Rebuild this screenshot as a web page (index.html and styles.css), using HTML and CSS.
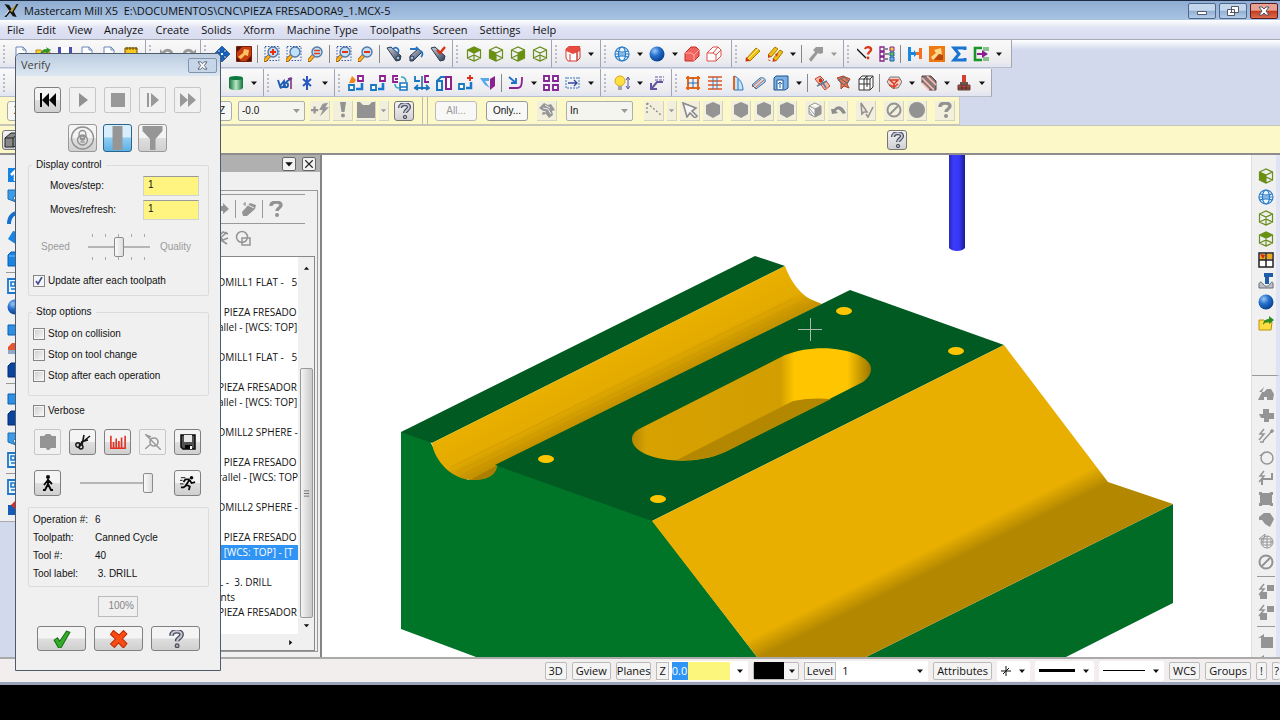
FILE: index.html
```html
<!DOCTYPE html>
<html lang="en">
<head>
<meta charset="utf-8">
<title>Mastercam Mill X5</title>
<link rel="stylesheet" href="styles.css">
</head>
<body>
<svg class="defs" aria-hidden="true">
<defs>
<linearGradient id="steel" x2="1" y2="1"><stop offset="0" stop-color="#cdd5e2"/><stop offset="1" stop-color="#2e3c55"/></linearGradient>
<radialGradient id="ball" cx=".35" cy=".3" r=".75"><stop offset="0" stop-color="#9cc8f8"/><stop offset=".45" stop-color="#2470cc"/><stop offset="1" stop-color="#063c8c"/></radialGradient>
<linearGradient id="cyl"><stop offset="0" stop-color="#107038"/><stop offset=".5" stop-color="#b8e8c4"/><stop offset="1" stop-color="#107038"/></linearGradient>
<linearGradient id="groove" gradientUnits="userSpaceOnUse" x1="600" y1="359" x2="621" y2="401"><stop offset="0" stop-color="#e9b000"/><stop offset=".6" stop-color="#e4ab00"/><stop offset="1" stop-color="#c59300"/></linearGradient>
<linearGradient id="slot" gradientUnits="userSpaceOnUse" x1="632" y1="0" x2="871" y2="0"><stop offset="0" stop-color="#b48800"/><stop offset=".06" stop-color="#d7a100"/><stop offset=".62" stop-color="#d29e00"/><stop offset=".68" stop-color="#ffc600"/><stop offset=".9" stop-color="#ffc600"/><stop offset="1" stop-color="#9a7600"/></linearGradient>
<linearGradient id="slope" gradientUnits="userSpaceOnUse" x1="929" y1="550" x2="938" y2="568"><stop offset="0" stop-color="#e8af00"/><stop offset="1" stop-color="#b38700"/></linearGradient>
<linearGradient id="drill"><stop offset="0" stop-color="#2929b8"/><stop offset=".3" stop-color="#3c3cff"/><stop offset=".65" stop-color="#3636f4"/><stop offset="1" stop-color="#1c1c90"/></linearGradient>
</defs>
<symbol id="down" viewBox="0 0 16 16"><path d="M2 5h12L8 12z" fill="currentColor"/></symbol>
<symbol id="new" viewBox="0 0 16 16"><path d="M3 1h7l3 3v11H3z" fill="#fff" stroke="#6a86b8"/><path d="M10 1v3h3" fill="none" stroke="#6a86b8"/></symbol>
<symbol id="open" viewBox="0 0 16 16"><path d="M1 4h5l1 2h8l-2 9H1z" fill="#fcd030" stroke="#b88a10"/><path d="M5 9c1-5 4-6 7-6l-1-2 5 3-5 4V6C9 6 7 7 5 9" fill="#309428"/></symbol>
<symbol id="save" viewBox="0 0 16 16"><path d="M1 1h14v14H1z" fill="#4a50b0"/><path d="M4 1h8v6H4zM4 10h8v5H4z" fill="#fff"/></symbol>
<symbol id="calc" viewBox="0 0 16 16"><path d="M2 2h12v13H2z" fill="#f8c820" stroke="#6a4800"/><path d="M4 1v3M7 1v3M10 1v3M13 1v3M4 8h8M4 11h8" stroke="#6a4800"/></symbol>
<symbol id="undo" viewBox="0 0 16 16"><path d="M4 7c4-5 10-3 9 5" fill="none" stroke="#9a9c9a" stroke-width="3"/><path d="M1 3v8h7z" fill="#9a9c9a"/></symbol>
<symbol id="redo" viewBox="0 0 16 16"><path d="M12 7c-4-5-10-3-9 5" fill="none" stroke="#9a9c9a" stroke-width="3"/><path d="M15 3v8H8z" fill="#9a9c9a"/></symbol>
<symbol id="pan" viewBox="0 0 16 16"><path d="m8 0 4 4h-2v2h2V4l4 4-4 4v-2h-2v2h2l-4 4-4-4h2v-2H4v2L0 8l4-4v2h2V4H4z" fill="#1762bc" stroke="#0b3d80" stroke-width=".6"/><path d="M7 7h2v2H7z" fill="#fff"/></symbol>
<symbol id="fit" viewBox="0 0 16 16"><path d="M.5.5h15v15H.5z" fill="#c83c10" stroke="#7c2008"/><path d="M1 1h5L1 6zM15 10v5h-5zM1 11v4h4z" fill="#501808"/><path d="m8 3 5 1-1 6-3-1-4 4-3-2 5-4z" fill="#ffc060"/></symbol>
<symbol id="lens" viewBox="0 0 16 16"><path d="M6 9 1 14.500" stroke="#9c5a08" stroke-width="4" stroke-linecap="round"/><path d="M6 9 1.500 14" stroke="#ffb524" stroke-width="2.400" stroke-linecap="round"/><circle cx="9" cy="6" r="5" fill="#bfe0fa" stroke="#5478a4" stroke-width="1.400"/></symbol>
<symbol id="zoomin" viewBox="0 0 16 16"><path d="M1 .5h14v14H1z" fill="none" stroke="#2858b0" stroke-dasharray="1.500 1.500"/><use href="#lens"/><path d="M6 6h6M9 3v6" stroke="#e83010" stroke-width="2"/></symbol>
<symbol id="zoombox" viewBox="0 0 16 16"><path d="M1 .5h14v14H1z" fill="none" stroke="#2858b0" stroke-dasharray="1.500 1.500"/><use href="#lens"/></symbol>
<symbol id="zoomeq" viewBox="0 0 16 16"><use href="#lens"/><path d="M6 4.500h6M6 7.500h6" stroke="#d84020" stroke-width="1.600"/></symbol>
<symbol id="zoomoutbox" viewBox="0 0 16 16"><path d="M1 .5h14v14H1z" fill="none" stroke="#2858b0" stroke-dasharray="1.500 1.500"/><use href="#lens"/><path d="M6 6h6" stroke="#e83010" stroke-width="2"/></symbol>
<symbol id="zoomout" viewBox="0 0 16 16"><use href="#lens"/><path d="M6 6h6" stroke="#e83010" stroke-width="2"/></symbol>
<symbol id="scope1" viewBox="0 0 16 16"><path d="m1 2 4-1 10 9-1 4-4 1z" fill="url(#steel)" stroke="#28384c"/><path d="M7 3c3-3 7 0 5 4" fill="none" stroke="#2474c8" stroke-width="1.700"/><circle cx="12" cy="12" r="2" fill="#a8bcd8" stroke="#28384c"/></symbol>
<symbol id="scope2" viewBox="0 0 16 16"><path d="m2 10 8-7 4 3-9 9H2z" fill="url(#steel)" stroke="#28384c"/><path d="M2 3h8l-2-2m5 4c2 2 2 4 0 6" fill="none" stroke="#2474c8" stroke-width="1.800"/><circle cx="4" cy="12" r="2" fill="#a8bcd8" stroke="#28384c"/></symbol>
<symbol id="scope3" viewBox="0 0 16 16"><path d="m1 2 4-1 10 9-1 4-4 1z" fill="url(#steel)" stroke="#28384c"/><path d="m7 4 3 3 5-6" fill="none" stroke="#dc2c10" stroke-width="2.300"/></symbol>
<symbol id="cube" viewBox="0 0 16 16"><path d="M1.500 4 8 1l6.500 3v8L8 15l-6.500-3zM1.500 4 8 7l6.500-3M8 7v8M1.500 12 8 9l6.500 3" fill="none" stroke="#6a8e1c" stroke-width="1.200"/></symbol>
<symbol id="cubetop" viewBox="0 0 16 16"><path d="M1.500 4 8 1l6.500 3L8 7z" fill="#6a9208"/><use href="#cube"/></symbol>
<symbol id="cubeleft" viewBox="0 0 16 16"><path d="M1.500 4 8 7v8l-6.500-3z" fill="#6a9208"/><use href="#cube"/></symbol>
<symbol id="cuberight" viewBox="0 0 16 16"><path d="M14.500 4 8 7v8l6.500-3z" fill="#6a9208"/><use href="#cube"/></symbol>
<symbol id="cubered" viewBox="0 0 16 16"><path d="M1 3 4 .5h11L12 4v11H3l-2-3z" fill="#fff" stroke="#d43c34"/><path d="M1 3 4 .5h11V5L8 8 1 5z" fill="#e84c40"/><path d="M5 8v7M12 4v11l3-3V2" fill="none" stroke="#d43c34"/></symbol>
<symbol id="globe" viewBox="0 0 16 16"><g fill="none" stroke="#2c7cc8" stroke-width="1.200"><circle cx="8" cy="8" r="7" fill="#e8f6ff"/><ellipse cx="8" cy="8" rx="3.500" ry="7"/><path d="M1 8h14M2 5c4 1.500 8 1.500 12 0M2 11c4-1.500 8-1.500 12 0"/></g></symbol>
<symbol id="sphere" viewBox="0 0 16 16"><circle cx="8" cy="8" r="7.500" fill="url(#ball)"/></symbol>
<symbol id="solid" viewBox="0 0 16 16"><path d="M1 7 7 1h5l3 3v6l-5 5H1z" fill="#f06460" stroke="#c82820"/><path d="M1 7h6l3 2 5-5M10 9v6" fill="none" stroke="#ffaaa4"/></symbol>
<symbol id="solidwire" viewBox="0 0 16 16"><path d="M1 7 7 1h5l3 3v6l-5 5H1zM1 7h6l3 2 5-5M10 9v6M7 7l5-6" fill="#fff" stroke="#e05048"/></symbol>
<symbol id="pencil" viewBox="0 0 16 16"><path d="m1 13 10-11 4 3L5 15z" fill="#f4c010" stroke="#a87c08"/><path d="m1 11-.5 4.500L5 15z" fill="#d42c14"/><path d="m3 13 10-10" stroke="#fff09a"/></symbol>
<symbol id="pencils" viewBox="0 0 16 16"><path d="m1 9 7-8 3 2-7 8zM6 13l7-9 3 2-7 9z" fill="#f4c010" stroke="#a87c08"/><path d="M1 8v4l3-1zM6 12l-.5 4 3.500-1zM2 15l-1-2 3 2zM8 8l3-1-1 4z" fill="#d43c14"/></symbol>
<symbol id="pengrey" viewBox="0 0 16 16"><path d="m1 13 6-7-2-2 3-3h7v6l-3 1-2-1-7 9z" fill="#999"/></symbol>
<symbol id="query" viewBox="0 0 16 16"><path d="m0 3 9 9" stroke="#111" stroke-width="1.300"/><path d="M8 3c1-3 7-2 6 1-.5 2-3 2-3 4.500" fill="none" stroke="#d83818" stroke-width="2.300"/><circle cx="11" cy="12" r="1.400" fill="#d83818"/></symbol>
<symbol id="chain" viewBox="0 0 16 16"><path d="M1 1h4v4H1zM1 6h4v4H1zM1 11h4v4H1z" fill="#fff" stroke="#84208c" stroke-width="1.300"/><path d="M11 1h4v4h-4z" fill="#f8d050" stroke="#84208c"/><path d="M11 6h4v4h-4z" fill="#60c060" stroke="#205c98"/><path d="M11 11h4v4h-4z" fill="#70b0f0" stroke="#205c98"/><path d="M6 3h3M6 8h4M6 13h3" stroke="#222"/></symbol>
<symbol id="hh" viewBox="0 0 16 16"><path d="M1 1h3v5h3V4l3 4-3 3V9H4v6H1z" fill="#1888e0"/><path d="M15 2h-3v4H9v3h3v4h3z" fill="#f4701c"/></symbol>
<symbol id="tool" viewBox="0 0 16 16"><path d="M0 0h16v16H0z" fill="#f07810"/><path d="m5 4 7-2 1 7-3-1-6 6-2-3 5-4z" fill="#ffd890"/><path d="m10 8 4 1v5H5z" fill="#b84808"/></symbol>
<symbol id="sigma" viewBox="0 0 16 16"><path d="M14 4V2H3l5 6-5 6h11v-2" fill="none" stroke="#1874d0" stroke-width="3"/></symbol>
<symbol id="post" viewBox="0 0 16 16"><path d="M9 2H2v12h7" fill="none" stroke="#189428" stroke-width="2.600"/><path d="M11 1v4M13 1v4M15 1v4M11 11v4M13 11v4M15 11v4" stroke="#189428"/><path d="M4 7h5V4l6 4-6 4V9H4z" fill="#8c1c90"/></symbol>
<symbol id="cylinder" viewBox="0 0 16 16"><path d="M1 3v10c2 3 12 3 14 0V3z" fill="url(#cyl)"/><ellipse cx="8" cy="3" rx="7" ry="2" fill="#0c7840"/></symbol>
<symbol id="axes" viewBox="0 0 16 16"><path d="M1 5l2 6 4-5 1 5-5 2M7 10c0-3 4-3 4 0s-4 3-4 0M9 7l6-4" fill="none" stroke="#205cb0" stroke-width="1.900"/><path d="M14 3v11M11 4l3-1" stroke="#84307c" stroke-width="1.600"/></symbol>
<symbol id="star" viewBox="0 0 16 16"><path d="M8 1v14M4 4l8 7M12 4 4 11" stroke="#2858c0" stroke-width="2"/></symbol>
<symbol id="x1" viewBox="0 0 16 16"><path d="M10 1h5v5h-5z" fill="#fff" stroke="#8c2090" stroke-width="1.800"/><path d="M1 10h5v5H1z" fill="#fff" stroke="#1878c0" stroke-width="1.800"/><path d="m1 8 3-7 4 4-2 3z" fill="#f08818"/><path d="M8 14h6V8" fill="none" stroke="#1878d0" stroke-width="2.600"/></symbol>
<symbol id="x2" viewBox="0 0 16 16"><path d="M10 1h5v5h-5z" fill="#fff" stroke="#8c2090" stroke-width="1.800"/><path d="M1 10h5v5H1z" fill="#fff" stroke="#1878c0" stroke-width="1.800"/><path d="M8 14h5V8" fill="none" stroke="#1878d0" stroke-width="2.600"/></symbol>
<symbol id="x3" viewBox="0 0 16 16"><path d="M6 1H1v6h5M3 4h3" fill="none" stroke="#8c2090" stroke-width="1.800"/><path d="M8 8h7v7H8zM8 12h7" fill="#fff" stroke="#1878c0" stroke-width="1.600"/><path d="M9 2c4 0 5 2 5 5M3 9c0 3 1 4 4 4" fill="none" stroke="#38a8b8" stroke-width="1.600"/></symbol>
<symbol id="x4" viewBox="0 0 16 16"><path d="M1 1v5h5M0 13h15M4 10l-3 3 3 2M12 10l3 3-3 2" fill="none" stroke="#1878c0" stroke-width="1.800"/><path d="M15 1h-4v6h4" fill="none" stroke="#8c2090" stroke-width="1.800"/><path d="M8 1v14" stroke="#246cac" stroke-width="1.600"/></symbol>
<symbol id="x5" viewBox="0 0 16 16"><path d="M1 6h5v9H1zM1 6l4-4h4" fill="none" stroke="#1878c0" stroke-width="2"/><path d="M10 2h5v12h-5z" fill="#fff" stroke="#8c2090" stroke-width="2"/></symbol>
<symbol id="x6" viewBox="0 0 16 16"><path d="M1 9h5v5H1z" fill="#fff" stroke="#1878c0" stroke-width="1.800"/><path d="M8 13h5V7" fill="none" stroke="#1878d0" stroke-width="2.500"/><path d="M9 3h6M12 0v6" stroke="#e02c14" stroke-width="1.800"/></symbol>
<symbol id="x7" viewBox="0 0 16 16"><path d="M0 3h9v3H5l5 7-5-3z" fill="#58a8ec"/><path d="m10 4 5-3v10l-5 4z" fill="#8c2090"/></symbol>
<symbol id="x8" viewBox="0 0 16 16"><path d="m1 2 7 6M8 3v5H3" fill="none" stroke="#2070c8" stroke-width="1.800"/><path d="M1 13h8c4 0 5-2 5-11" fill="none" stroke="#8c2090" stroke-width="1.800"/></symbol>
<symbol id="x9" viewBox="0 0 16 16"><path d="M1 1h5v5H1zM10 1h5v5h-5zM1 10h5v5H1zM10 10h5v5h-5z" fill="#fff" stroke="#842898" stroke-width="1.900"/></symbol>
<symbol id="x10" viewBox="0 0 16 16"><path d="M1 2v11M14 2v11M2 3h12M2 13h12" fill="none" stroke="#3478c4" stroke-dasharray="2 1"/><path d="M3 8h9M9 5l3 3-3 3" fill="none" stroke="#3448a0" stroke-width="1.400"/></symbol>
<symbol id="bulb" viewBox="0 0 16 16"><circle cx="6" cy="6" r="5" fill="#ffe040" stroke="#d8a820"/><path d="M4 11h4v4H4z" fill="#a0a4ac"/><path d="M14 3v10M12 5l2-3 2 3M12 11l2 3 2-3" fill="none" stroke="#5450a0"/></symbol>
<symbol id="entry" viewBox="0 0 16 16"><path d="M6 2h9M6 5h9" stroke="#6058a0" stroke-dasharray="3 1"/><path d="M14 7H8l-5 6M2 8v6h6" fill="none" stroke="#6058a0" stroke-width="2"/></symbol>
<symbol id="s1" viewBox="0 0 16 16"><path d="M3 1v14M13 1v14M1 3h14M1 13h14" stroke="#e86414" stroke-width="2"/><path d="M8 3v10M3 8h10" stroke="#2464b0"/></symbol>
<symbol id="s2" viewBox="0 0 16 16"><path d="M1 2h14M1 6h14M1 10h14M1 14h14" stroke="#e05420" stroke-width="1.500"/><path d="M6 2v12M10 2v12" stroke="#4078b8"/></symbol>
<symbol id="s3" viewBox="0 0 16 16"><path d="M5 15V1c6 2 9 8 9 14z" fill="#c8e4f8" stroke="#2878c0"/><path d="M5 1v14" stroke="#e06420" stroke-width="2"/><path d="M9 4v11" stroke="#2878c0"/></symbol>
<symbol id="s4" viewBox="0 0 16 16"><path d="m1 10 8-7c4-1 6 1 5 4L5 14z" fill="#c0dcf4" stroke="#3470a8"/><path d="m1 12 9-8m-6 9 9-8" stroke="#d85c30"/></symbol>
<symbol id="s5" viewBox="0 0 16 16"><path d="M1 3 3 1h12v12l-3 2H1z" fill="#7ab0e4" stroke="#1c5490"/><path d="M4 14V5h6v9" fill="#fff" stroke="#1c5490"/><path d="M7 13V7M5 9l2-2 2 2" fill="none" stroke="#2068b0"/></symbol>
<symbol id="s6" viewBox="0 0 16 16"><path d="M1 4 6 1l4 4-5 4zM7 10l5-4 4 5-5 4z" fill="#fcb8a8" stroke="#c84428"/><path d="m3 11 10-5M6 3l6 10" stroke="#587c98" stroke-width="1.500"/><path d="M5 4h3v3H5z" fill="#e42810"/></symbol>
<symbol id="s7" viewBox="0 0 16 16"><path d="m1 3 6-2 7 3-3 5 2 4-5-2-3 3V8z" fill="#f07850" stroke="#a84028"/><path d="m2 5 6-3 5 4-5 4zM5 4l6 4" fill="none" stroke="#4c6c80"/></symbol>
<symbol id="s8" viewBox="0 0 16 16"><path d="M1 4 4 1h11v11l-3 3H1zM1 4h11v11M12 4l3-3M6 4v11M1 9h11M6 4l3-3v11" fill="#fff" stroke="#333"/></symbol>
<symbol id="s9" viewBox="0 0 16 16"><path d="m1 7 3-5h9l3 5-4 6H6z" fill="#f8ccc0" stroke="#6c7880"/><path d="M4 5h8L8 9zM8 9v5M3 10l5 2 4-3" fill="none" stroke="#d83c20" stroke-width="1.500"/></symbol>
<symbol id="s10" viewBox="0 0 16 16"><path d="M1 1h9l5 5v9H8L1 8z" fill="#887878" stroke="#584444"/><path d="m1 3 12 12M1 8l7 7M6 1l9 9" stroke="#ffc0b4" stroke-width="1.600"/></symbol>
<symbol id="s11" viewBox="0 0 16 16"><path d="M6 0h4v7H6z" fill="#d44030"/><path d="M4 7h8v3H4z" fill="#705450"/><path d="M2 10h12v5H2z" fill="#c44434" stroke="#584440"/><path d="M2 13h12M6 10v5M10 10v5" stroke="#403838"/></symbol>
<symbol id="help" viewBox="0 0 16 16"><path d="M4 5c0-5 9-5 9-1 0 3-4 3-4 6" fill="none" stroke="#484c5c" stroke-width="4.200"/><path d="M4 5c0-5 9-5 9-1 0 3-4 3-4 6" fill="none" stroke="#c4c8d4" stroke-width="1.800"/><circle cx="9" cy="14" r="1.700" fill="#aaa" stroke="#484c5c"/></symbol>
<symbol id="ghelp" viewBox="0 0 16 16"><path d="M3 5c0-5 10-5 10-1 0 3-4 3-4 6" fill="none" stroke="#929292" stroke-width="3.400"/><circle cx="9" cy="14" r="2" fill="#929292"/></symbol>
<symbol id="plusbolt" viewBox="0 0 20 16"><path d="M0 8h8M4 4v8" stroke="#969696" stroke-width="2.500"/><path d="m13 1 6-1-3 5h4L10 15l3-7H9z" fill="#969696"/></symbol>
<symbol id="bang" viewBox="0 0 16 16"><path d="M5 0h6L9.500 10h-3z" fill="#929292"/><circle cx="8" cy="13.500" r="2" fill="#929292"/></symbol>
<symbol id="robot" viewBox="0 0 18 16"><path d="M0 0h3l3 3h6l3-3h3v16H0z" fill="#929292"/></symbol>
<symbol id="shape" viewBox="0 0 16 16"><path d="M0 6 5 1l4 2 3-1 4 6-3 1 1 4-4 3-3-4-4 1 1-4z" fill="#969696"/><path d="m4 6 5 1 3 5M6 3l5 3M3 9l4 1" stroke="#eee" fill="none"/></symbol>
<symbol id="dots" viewBox="0 0 16 16"><path d="M1 1v12M1 1l14 12" fill="none" stroke="#888" stroke-width="1.300" stroke-dasharray="2 2"/></symbol>
<symbol id="cursor" viewBox="0 0 16 16"><path d="m1 1 13 5-4 3 5 5-2 2-5-5-3 4z" fill="#f7f7f7" stroke="#8a8a8a" stroke-width="1.600"/></symbol>
<symbol id="hex" viewBox="0 0 16 16"><path d="m8 0 7 3v9l-7 4-7-4V3z" fill="#949494"/></symbol>
<symbol id="hexhalf" viewBox="0 0 16 16"><path d="m8 1 6 3v8l-6 3-6-3V4zM8 7v8M2 4l6 3 6-3" fill="#fff" stroke="#949494"/><path d="m8 7 6-3v8l-6 3z" fill="#949494"/><path d="m2 6 6 7M2 9l4 5" stroke="#949494"/></symbol>
<symbol id="bend" viewBox="0 0 16 16"><path d="m1 7 1 5 6-1-2-2c2-3 4-1 7 3l3-1c-3-7-8-9-12-4z" fill="#8e8e8e"/></symbol>
<symbol id="pick" viewBox="0 0 16 16"><path d="m3 1 6 9H6l-2 2zM8 12l2 3 5-10" fill="none" stroke="#929292" stroke-width="1.600"/></symbol>
<symbol id="no" viewBox="0 0 16 16"><circle cx="8" cy="8" r="6.500" fill="none" stroke="#929292" stroke-width="2"/><path d="m4 12 8-8" stroke="#929292" stroke-width="2"/></symbol>
<symbol id="disc" viewBox="0 0 16 16"><circle cx="8" cy="8" r="8" fill="#929292"/></symbol>
<symbol id="grid" viewBox="0 0 16 16"><path d="M1 1h14v14H1z" fill="#fff" stroke="#222" stroke-width="1.500"/><path d="M2 2h5v6H2zM9 2h5v5H9z" fill="#f0a818"/><path d="m2 2 5 1-2 4z" fill="#d42810"/><path d="M8 1v14M1 8h14" stroke="#222" stroke-width="1.500"/></symbol>
<symbol id="mill" viewBox="0 0 16 16"><path d="M6 0h9v4h-4v7H7V4H6z" fill="#1c5ca8"/><path d="M1 15v-4c1-3 3-2 4 0 2 3 5 3 7 0 1-2 3-3 3 0v4z" fill="#bcc0c8" stroke="#686c74"/></symbol>
<symbol id="folder" viewBox="0 0 16 16"><path d="M1 5h5l2 2h6l-1 8H1z" fill="#ffdc40" stroke="#b8940c"/><path d="M5 10c0-4 3-6 6-6V1l5 4-5 4V7C8 7 6 8 5 10" fill="#2c8c24"/></symbol>
<symbol id="b1" viewBox="0 0 16 16"><path d="M6 1 1 6h3l-4 8h6v-3h3v3h6l1-6-3-5H9L6 6H4z" fill="#949494"/></symbol>
<symbol id="b2" viewBox="0 0 16 16"><path d="M1 7h4V2h6v4h5v6h-5v3H6v-4H3z" fill="#949494"/></symbol>
<symbol id="bolt" viewBox="0 0 16 16"><path d="M6 1 2 6h4l-5 6" fill="none" stroke="#949494" stroke-width="1.500"/></symbol>
<symbol id="b3" viewBox="0 0 16 16"><use href="#bolt"/><path d="M5 13 14 3M12 3h4M14 1v4M2 14h4" stroke="#949494" stroke-width="1.500"/></symbol>
<symbol id="b4" viewBox="0 0 16 16"><circle cx="9" cy="9" r="6" fill="none" stroke="#949494" stroke-width="1.400"/><path d="m1 7 6-5-3 5z" fill="#949494"/></symbol>
<symbol id="b5" viewBox="0 0 16 16"><use href="#bolt"/><path d="M4 15V9h10V3" fill="none" stroke="#949494" stroke-width="2"/></symbol>
<symbol id="b6" viewBox="0 0 16 16"><path d="M2 2h12v12H2z" fill="#949494"/><path d="M1 1h3v3H1zM12 1h3v3h-3zM1 12h3v3H1zM12 12h3v3h-3z" fill="#949494"/></symbol>
<symbol id="b7" viewBox="0 0 16 16"><path d="m1 5 5-4h6l4 6-4 8-5-3-3-4H1z" fill="#949494"/></symbol>
<symbol id="b8" viewBox="0 0 16 16"><circle cx="9" cy="9" r="6" fill="none" stroke="#949494"/><path d="M3 9h12M9 3v12M5 6h8v6H5zM1 6l6-5-1 5z" fill="none" stroke="#949494"/></symbol>
<symbol id="b9" viewBox="0 0 16 16"><use href="#bolt"/><path d="M9 2h7v6H9zM2 9h7v7H2z" fill="#949494"/></symbol>
<symbol id="b10" viewBox="0 0 16 16"><path d="M3 4h12v11H3zM0 5l6-4v3z" fill="#949494"/></symbol>
<symbol id="blue" viewBox="0 0 16 16"><path d="m1 4 3-3h11v11l-3 3H1z" fill="#1684e4" stroke="#0c5cac"/><path d="M2 5h9v9" fill="none" stroke="#70bcff"/></symbol>
<symbol id="blueup" viewBox="0 0 16 16"><path d="M1 1h14v14H1z" fill="#1684e4"/><path d="M8 14V5M4 8l4-4 4 4" fill="none" stroke="#fff" stroke-width="2.500"/></symbol>
<symbol id="blueturn" viewBox="0 0 16 16"><path d="M1 2h14v5c-5 0-8 1-9 3l3 4-8-3z" fill="#3c9ce8" stroke="#1c6cb0"/></symbol>
<symbol id="arc" viewBox="0 0 16 16"><path d="M2 15C2 7 7 3 15 3" fill="none" stroke="#1470d0" stroke-width="4"/></symbol>
<symbol id="bluedrop" viewBox="0 0 16 16"><path d="m6 1 9 2v9l-5 3-9-6z" fill="#1684e4"/></symbol>
<symbol id="bluered" viewBox="0 0 16 16"><path d="M1 5h14v10H1z" fill="#2c90e8" stroke="#0c5cac"/><path d="M8 1h7v5H8z" fill="#e84820"/></symbol>
<symbol id="slab" viewBox="0 0 16 16"><path d="m1 6 4-4h10v4l-4 3H1z" fill="#e85430"/><path d="M1 9h10l4-3v4l-4 3H1z" fill="#8eaac8"/></symbol>
<symbol id="navy" viewBox="0 0 16 16"><path d="m1 4 3-3h11v11l-3 3H1z" fill="#0844a0" stroke="#042c6c"/></symbol>
<symbol id="sheet" viewBox="0 0 16 16"><path d="M1 1h14v14H1z" fill="#e8f4ff" stroke="#1c78c8" stroke-width="1.800"/><path d="M4 4h4v4H4zM10 5h4M4 11h8" fill="none" stroke="#1c78c8" stroke-width="1.600"/></symbol>
<symbol id="redblue" viewBox="0 0 16 16"><path d="M1 5h10v10H1z" fill="#145cb4"/><path d="M4 5 8 1l6 4-4 6z" fill="#e02c20"/></symbol>
<symbol id="eraser" viewBox="0 0 16 16"><path d="m1 11 8-9 6 2-1 4-8 7H2z" fill="#949494"/><path d="m5 3 8 4" stroke="#eee"/><path d="M2 3h3M4 1v4" stroke="#949494"/></symbol>
<symbol id="arrowr" viewBox="0 0 16 16"><path d="M0 2h5v3h4V2l6 6-6 5v-3H0z" fill="#949494"/></symbol>
<symbol id="weave" viewBox="0 0 16 16"><path d="m1 2 5 3 3-3 5 2M1 8l5-1 3 3 5-2M4 13l3-3 6 4M13 2 2 12" fill="none" stroke="#949494" stroke-width="1.600"/></symbol>
<symbol id="overlap" viewBox="0 0 16 16"><circle cx="7" cy="7" r="5.500" fill="none" stroke="#949494" stroke-width="1.500"/><path d="M7 8h8v7H7z" fill="none" stroke="#949494" stroke-width="1.500"/></symbol>
<symbol id="rewind" viewBox="0 0 16 16"><path d="M0 1h2v14H0zM9 1v14L2 8zM16 1v14L9 8z" fill="#080808"/></symbol>
<symbol id="play" viewBox="0 0 16 16"><path d="m4 1 9 7-9 7z" fill="#929292"/></symbol>
<symbol id="stop" viewBox="0 0 16 16"><path d="M1 1h14v14H1z" fill="#999"/></symbol>
<symbol id="step" viewBox="0 0 16 16"><path d="M2 1h2v14H2zM6 1l8 7-8 7z" fill="#999"/></symbol>
<symbol id="ffwd" viewBox="0 0 16 16"><path d="m0 1 8 7-8 7zM8 1l8 7-8 7z" fill="#999"/></symbol>
<symbol id="eye" viewBox="0 0 24 24"><g fill="none" stroke="#8e8e8e" stroke-width="1.300"><circle cx="12" cy="12" r="11"/><ellipse cx="12" cy="8.500" rx="3.500" ry="4"/><ellipse cx="12" cy="14" rx="5" ry="5"/><circle cx="12" cy="12" r="2"/><path d="M10 16h4"/></g></symbol>
<symbol id="stock" viewBox="0 0 24 24"><path d="M7 0h10v24H7z" fill="#969696"/></symbol>
<symbol id="funnel" viewBox="0 0 24 24"><path d="M2 0h20v5l-7 8v11H9.500V13L2 5z" fill="#969696"/></symbol>
<symbol id="machine" viewBox="0 0 16 16"><path d="M0 2h4l2-2h4l2 2h4v12h-5l-2 2H7l-1-2H0z" fill="#949494"/></symbol>
<symbol id="section" viewBox="0 0 16 16"><path d="M15 2 4 11M13 6 6 8M9 1 7 11" stroke="#161616" stroke-width="1.600"/><circle cx="3" cy="11" r="2.200" fill="none" stroke="#161616" stroke-width="1.400"/><circle cx="6" cy="13" r="2" fill="none" stroke="#161616" stroke-width="1.400"/></symbol>
<symbol id="chart" viewBox="0 0 18 16"><path d="M1 1v14h16V1M4 15V8M7 15V4M10 15V7M13 15V3" fill="none" stroke="#e42e20" stroke-width="1.800"/></symbol>
<symbol id="measure" viewBox="0 0 16 16"><circle cx="9" cy="8" r="4" fill="none" stroke="#999" stroke-width="1.600"/><path d="m0 0 16 16M0 15l6-5M1 1l5 2" stroke="#999" stroke-width="1.400"/></symbol>
<symbol id="floppy" viewBox="0 0 16 16"><path d="M1 1h14v14H3l-2-2z" fill="#525252" stroke="#080808" stroke-width="1.500"/><path d="M4 1h8v7H4z" fill="#e8e8e8"/><path d="M5 11h7v4H5z" fill="#080808"/><path d="M10 12h2v3h-2z" fill="#fff"/></symbol>
<symbol id="walk" viewBox="0 0 16 16"><circle cx="8" cy="2" r="2" fill="#060606"/><path d="M8 4v6M8 5l-4 5M8 5l4 4M8 9l-3 6H3M8 9l3 6h2" fill="none" stroke="#060606" stroke-width="1.800"/></symbol>
<symbol id="run" viewBox="0 0 18 16"><circle cx="13" cy="2" r="2" fill="#060606"/><path d="m11 4-4 6 4 2-1 4M8 10l-4 3H1M11 4 6 4 4 7M11 5l2 3 4-1" fill="none" stroke="#060606" stroke-width="2"/><path d="M1 2h5M0 5h3M0 9h4" stroke="#060606"/></symbol>
<symbol id="ok" viewBox="0 0 16 16"><path d="m1 9 3-2 2 3 6-9 3 1-8 14H5z" fill="#35ad2c" stroke="#1d7418"/></symbol>
<symbol id="cancel" viewBox="0 0 16 16"><path d="m3 .5 5 4 4-4 3 3-4 4.500 4 4-3 4-4.500-4.500L4 15.500l-3.500-3L5 8 .5 4z" fill="#fb4c14" stroke="#c03008"/></symbol>
<symbol id="close" viewBox="0 0 12 10"><path d="m1 1 3 0 2 2 2-2h3L8 5l3 4H8L6 7 4 9H1l3-4z" fill="#fff" stroke="#50586a"/></symbol>
<symbol id="xthin" viewBox="0 0 16 16"><path d="m2 2 12 12M14 2 2 14" stroke="#222" stroke-width="1.700"/></symbol>
<symbol id="bldg" viewBox="0 0 16 16"><path d="m1 6 6-5h8v10l-5 4H1z" fill="#888" stroke="#222"/><path d="M1 6h8v9M9 6l6-5" fill="none" stroke="#222"/></symbol>
</svg>

<header class="titlebar">
<svg class="logo" viewBox="0 0 16 16"><path d="m1 1 5 1 3 5 5-6h2l-5 8 3 6-4-1-3-4-4 5H1l5-7z" fill="#141414"/><path d="m7 8 7-7-5 9z" fill="#c09c30"/><path d="m2 13 4-5" stroke="#f3f3f3"/></svg>
<h1>Mastercam Mill X5&nbsp; E:\DOCUMENTOS\CNC\PIEZA FRESADORA9_1.MCX-5</h1>
<button class="winbtn" aria-label="Minimize"><svg viewBox="0 0 12 10"><path d="M1.500 5.500h9v3h-9z" fill="#fff" stroke="#50586a"/></svg></button>
<button class="winbtn" aria-label="Restore"><svg viewBox="0 0 12 10"><path d="M4.500.5h7v6h-7zM.5 3.500h7v6h-7z" fill="#fff" stroke="#50586a"/><path d="M3 6h2v1H3z" fill="#50586a"/></svg></button>
<button class="winbtn winclose" aria-label="Close"><svg><use href="#close"/></svg></button>
</header>

<nav class="menubar">
<button>File</button><button>Edit</button><button>View</button><button>Analyze</button><button>Create</button><button>Solids</button><button>Xform</button><button>Machine Type</button><button>Toolpaths</button><button>Screen</button><button>Settings</button><button>Help</button>
</nav>

<div class="bars">
<div class="bar">
<div class="group"><button aria-label="New"><svg><use href="#new"/></svg></button><button aria-label="Open"><svg><use href="#open"/></svg></button><button aria-label="Save"><svg><use href="#save"/></svg></button><button aria-label="Print"><svg><use href="#new"/></svg></button><button aria-label="Preview"><svg><use href="#new"/></svg></button><button aria-label="Notes"><svg><use href="#calc"/></svg></button></div>
<div class="group tight"><button aria-label="Undo"><svg><use href="#undo"/></svg></button><button aria-label="Redo"><svg><use href="#redo"/></svg></button></div>
<div class="group"><button aria-label="Pan"><svg><use href="#pan"/></svg></button><button aria-label="Fit"><svg><use href="#fit"/></svg></button><i></i><button aria-label="Zoom window"><svg><use href="#zoomin"/></svg></button><button aria-label="Zoom target"><svg><use href="#zoombox"/></svg></button><button aria-label="Zoom selected"><svg><use href="#zoomeq"/></svg></button><i></i><button aria-label="Unzoom"><svg><use href="#zoomoutbox"/></svg></button><button aria-label="Zoom out"><svg><use href="#zoomout"/></svg></button><i></i><button aria-label="Dynamic rotate"><svg><use href="#scope1"/></svg></button><button aria-label="Previous view"><svg><use href="#scope2"/></svg></button><button aria-label="Named view"><svg><use href="#scope3"/></svg></button></div>
<div class="group tight"><button aria-label="Top view"><svg><use href="#cubetop"/></svg></button><button aria-label="Front view"><svg><use href="#cubeleft"/></svg></button><button aria-label="Right view"><svg><use href="#cuberight"/></svg></button><button aria-label="Isometric view"><svg><use href="#cube"/></svg></button></div>
<div class="group"><button aria-label="Planes"><svg><use href="#cubered"/></svg></button><button class="arr" aria-label="More planes"><svg><use href="#down"/></svg></button></div>
<div class="group roomy"><button aria-label="Wireframe"><svg><use href="#globe"/></svg></button><button class="arr" aria-label="More wireframe"><svg><use href="#down"/></svg></button><button aria-label="Shaded"><svg><use href="#sphere"/></svg></button><button class="arr" aria-label="More shading"><svg><use href="#down"/></svg></button><button aria-label="Solid"><svg><use href="#solid"/></svg></button><button aria-label="Solid wireframe"><svg><use href="#solidwire"/></svg></button></div>
<div class="group"><button aria-label="Delete"><svg><use href="#pencil"/></svg></button><button aria-label="Delete duplicates"><svg><use href="#pencils"/></svg></button><button class="arr" aria-label="More delete"><svg><use href="#down"/></svg></button><i></i><button disabled aria-label="Undelete"><svg><use href="#pengrey"/></svg></button><button class="arr" disabled aria-label="More undelete"><svg><use href="#down"/></svg></button></div>
<div class="group roomy"><button aria-label="Analyze entity"><svg><use href="#query"/></svg></button><button aria-label="Analyze chain"><svg><use href="#chain"/></svg></button><i></i><button aria-label="Compare"><svg><use href="#hh"/></svg></button><button aria-label="Toolpath"><svg><use href="#tool"/></svg></button><button aria-label="Statistics"><svg><use href="#sigma"/></svg></button><button aria-label="Post"><svg><use href="#post"/></svg></button><button class="arr" aria-label="More"><svg><use href="#down"/></svg></button></div>
</div>
<div class="bar">
<div class="group sketcher"><button aria-label="Cylinder"><svg><use href="#cylinder"/></svg></button><button class="arr" aria-label="More primitives"><svg><use href="#down"/></svg></button></div>
<div class="group"><button aria-label="Drafting"><svg><use href="#axes"/></svg></button><button aria-label="Point"><svg><use href="#star"/></svg></button><button class="arr" aria-label="More points"><svg><use href="#down"/></svg></button></div>
<div class="group"><button aria-label="Translate"><svg><use href="#x1"/></svg></button><button aria-label="Translate 3D"><svg><use href="#x2"/></svg></button><button aria-label="Rotate"><svg><use href="#x3"/></svg></button><button aria-label="Mirror"><svg><use href="#x4"/></svg></button><button aria-label="Scale"><svg><use href="#x5"/></svg></button><button aria-label="Move to origin"><svg><use href="#x6"/></svg></button><button aria-label="Project"><svg><use href="#x7"/></svg></button><i></i><button aria-label="Offset"><svg><use href="#x8"/></svg></button><button class="arr" aria-label="More offset"><svg><use href="#down"/></svg></button><button aria-label="Array"><svg><use href="#x9"/></svg></button><button aria-label="Stretch"><svg><use href="#x10"/></svg></button><button class="arr" aria-label="More stretch"><svg><use href="#down"/></svg></button></div>
<div class="group"><button aria-label="Light"><svg><use href="#bulb"/></svg></button><button class="arr" aria-label="More light"><svg><use href="#down"/></svg></button><button aria-label="Attributes entry"><svg><use href="#entry"/></svg></button></div>
<div class="group"><button aria-label="Net surface"><svg><use href="#s1"/></svg></button><button aria-label="Ruled surface"><svg><use href="#s2"/></svg></button><button aria-label="Revolved surface"><svg><use href="#s3"/></svg></button><button aria-label="Swept surface"><svg><use href="#s4"/></svg></button><button aria-label="Extruded surface"><svg><use href="#s5"/></svg></button><button class="arr" aria-label="More surfaces"><svg><use href="#down"/></svg></button><i></i><button aria-label="Trim to surfaces"><svg><use href="#s6"/></svg></button><button aria-label="Fillet surfaces"><svg><use href="#s7"/></svg></button><button aria-label="Surface from solid"><svg><use href="#s8"/></svg></button><i></i><button aria-label="Rough"><svg><use href="#s9"/></svg></button><button class="arr" aria-label="More rough"><svg><use href="#down"/></svg></button><button aria-label="Finish"><svg><use href="#s10"/></svg></button><button class="arr" aria-label="More finish"><svg><use href="#down"/></svg></button><button aria-label="Multiaxis"><svg><use href="#s11"/></svg></button><button class="arr" aria-label="More multiaxis"><svg><use href="#down"/></svg></button></div>
</div>
<div class="coords">
<button class="key">X</button><button class="key zkey">Z</button>
<select class="combo" aria-label="Z coordinate" disabled><option>-0.0</option></select>
<div class="tools"><button disabled aria-label="Fast point"><svg><use href="#plusbolt"/></svg></button><button disabled aria-label="Relative"><svg><use href="#bang"/></svg></button><button disabled aria-label="AutoCursor"><svg><use href="#robot"/></svg></button><button class="slim" disabled aria-label="AutoCursor options"><svg><use href="#down"/></svg></button></div>
<button class="raised" aria-label="Position help"><svg><use href="#help"/></svg></button>
<hr>
<div class="picks"><button class="pill" disabled>All...</button><button class="pill">Only...</button>
<div class="tools"><button disabled aria-label="Selection"><svg><use href="#shape"/></svg></button></div>
<select class="combo" aria-label="Selection mode" disabled><option>In</option></select></div>
<div class="tools selectors"><button disabled aria-label="Window"><svg><use href="#dots"/></svg></button><button disabled class="slim" aria-label="More windows"><svg><use href="#down"/></svg></button><button disabled aria-label="Standard selection"><svg><use href="#cursor"/></svg></button><button disabled aria-label="Solid selection"><svg><use href="#hex"/></svg></button><b></b><button disabled aria-label="Edge"><svg><use href="#hex"/></svg></button><button disabled aria-label="Face"><svg><use href="#hex"/></svg></button><button disabled aria-label="Body"><svg><use href="#hex"/></svg></button><b></b><button disabled aria-label="From back"><svg><use href="#hexhalf"/></svg></button><button disabled aria-label="Select last"><svg><use href="#bend"/></svg></button><b></b><button disabled aria-label="Validate"><svg><use href="#pick"/></svg></button><b></b><button disabled aria-label="Unselect all"><svg><use href="#no"/></svg></button><button disabled aria-label="End selection"><svg><use href="#disc"/></svg></button><b></b><button disabled aria-label="Selection help"><svg><use href="#ghelp"/></svg></button></div>
</div>
</div>
<div class="ribbon"><button class="raised" aria-label="Ribbon"><svg><use href="#bldg"/></svg></button><button class="raised ribbonhelp" aria-label="Ribbon help"><svg><use href="#help"/></svg></button></div>

<main class="workspace">
<aside class="leftbar"><div class="strip">
<svg><use href="#blueup"/></svg><svg><use href="#blueturn"/></svg><svg><use href="#arc"/></svg><svg><use href="#bluedrop"/></svg><svg><use href="#blue"/></svg><i></i><svg><use href="#sheet"/></svg><svg><use href="#sphere"/></svg><svg><use href="#bluered"/></svg><svg><use href="#slab"/></svg><svg><use href="#navy"/></svg><i></i><svg><use href="#bluered"/></svg><svg><use href="#navy"/></svg><svg><use href="#blueturn"/></svg><svg><use href="#sheet"/></svg><i></i><svg><use href="#sheet"/></svg><svg><use href="#redblue"/></svg>
</div></aside>
<section class="manager" aria-label="Operations manager">
<div class="mhead"><button aria-label="Menu"><svg><use href="#down"/></svg></button><button aria-label="Close panel"><svg><use href="#xthin"/></svg></button></div>
<div class="mbody">
<div class="mtools"><svg><use href="#arrowr"/></svg><i></i><svg><use href="#eraser"/></svg><i></i><svg><use href="#ghelp"/></svg></div>
<div class="mtools second"><svg><use href="#weave"/></svg><svg><use href="#overlap"/></svg></div>
<div class="tree">
<ul>
<li></li><li>DMILL1 FLAT -&nbsp;&nbsp; 5</li><li></li><li>- PIEZA FRESADO</li><li>allel - [WCS: TOP]</li><li></li><li>DMILL1 FLAT -&nbsp;&nbsp; 5</li><li></li><li>PIEZA FRESADOR</li><li>allel - [WCS: TOP]</li><li></li><li>DMILL2 SPHERE -</li><li></li><li>- PIEZA FRESADO</li><li>rallel - [WCS: TOP</li><li></li><li>DMILL2 SPHERE -</li><li></li><li>- PIEZA FRESADO</li><li class="sel">- [WCS: TOP] - [T</li><li></li><li>L -&nbsp; 3. DRILL</li><li>ints</li><li>PIEZA FRESADOR</li>
</ul>
<div class="vscroll"><svg class="up"><use href="#down"/></svg><div class="thumb"><svg viewBox="0 0 6 8"><path d="M0 1h6M0 4h6M0 7h6" stroke="#666"/></svg></div><svg><use href="#down"/></svg></div>
<div class="hscroll"><svg><use href="#down"/></svg></div>
</div>
</div>
</section>
<section class="viewport" aria-label="Part view">
<svg viewBox="322 155 930 502" preserveAspectRatio="xMinYMin slice">
<path d="M401 432 425 432 440 460 468 480 495 464 652 520 757 657H476L401 629z" fill="#007427"/>
<path d="M866 657 1173 504V603L1066 657z" fill="#006c25"/>
<path d="m401 432 354-176 30 10-353 177z" fill="#005a21"/>
<path d="m432 443 353-177c5 14 14 27 25 33l12 5-325 162c-1 9-10 14-25 14-20 0-38-20-40-37z" fill="url(#groove)"/>
<g stroke="#c49300" stroke-width="1" opacity=".45" fill="none"><path d="m451 467 342-168M456 472l343-169M464 474l340-170M474 477 690 369"/></g>
<path d="m470 480 26-14c1 8-8 15-26 14" fill="#aa7e00"/>
<path d="M495 465 850 290l154 55-352 176z" fill="#005a21"/>
<path d="m652 521 352-176 104 137 65 22-307 153H757z" fill="url(#slope)"/>
<path d="M639 429 785 355c38-15 86-3 86 14 0 5-3 9-8 13l-138 70c-37 17-93 7-93-13 0-4 2-7 7-10" fill="url(#slot)"/>
<path d="m677 460 116-59c14-3 27-3 38-2l-106 53c-14 6-31 9-48 8" fill="#b38800"/>
<g fill="#ffc600"><ellipse cx="844" cy="311" rx="8" ry="4"/><ellipse cx="956" cy="351" rx="8" ry="4"/><ellipse cx="546" cy="459" rx="8" ry="4"/><ellipse cx="658" cy="499" rx="8" ry="4"/></g>
<path d="M949 155h16v93c-3 4-13 4-16 0z" fill="url(#drill)"/>
<path d="M798 329.500h24M810.500 318v23" stroke="#a9b9ae"/>
</svg>
</section>
<aside class="rightbar">
<div class="strip top"><svg><use href="#cubeleft"/></svg><svg><use href="#globe"/></svg><svg><use href="#cube"/></svg><svg><use href="#cubetop"/></svg><svg><use href="#grid"/></svg><svg><use href="#mill"/></svg><svg><use href="#sphere"/></svg><svg><use href="#folder"/></svg></div>
<div class="strip"><svg><use href="#b1"/></svg><svg><use href="#b2"/></svg><svg><use href="#b3"/></svg><svg><use href="#b4"/></svg><svg><use href="#b5"/></svg><svg><use href="#b6"/></svg><svg><use href="#b7"/></svg><svg><use href="#b8"/></svg><svg><use href="#no"/></svg><i></i><svg><use href="#b9"/></svg><svg><use href="#b9"/></svg><i></i><svg><use href="#b10"/></svg><svg><use href="#b10"/></svg></div>
</aside>
</main>

<footer class="status">
<button>3D</button><button>Gview</button><button>Planes</button>
<label class="field"><span>Z</span><input class="depth" value="0.0"><svg><use href="#down"/></svg></label>
<button class="swatch" aria-label="Color"><b></b><svg><use href="#down"/></svg></button>
<label class="field"><span>Level</span><input class="level" value="1"><svg><use href="#down"/></svg></label>
<button>Attributes</button>
<button class="white" aria-label="Point style"><svg class="pt" viewBox="0 0 10 10"><path d="M5 0v10M0 5h10M2 8l6-6" stroke="#111"/></svg><svg><use href="#down"/></svg></button>
<button class="white" aria-label="Line width"><b class="thick"></b><svg><use href="#down"/></svg></button>
<button class="white" aria-label="Line style"><b class="thin"></b><svg><use href="#down"/></svg></button>
<button>WCS</button><button>Groups</button><button class="tiny">!</button><button class="tiny cut">?</button>
</footer>
<div class="blackout"></div>

<div class="dialog" role="dialog" aria-labelledby="vt">
<div class="dtitle"><h2 id="vt">Verify</h2><button class="dclose" aria-label="Close Verify"><svg><use href="#close"/></svg></button></div>
<form class="dbody">
<div class="keys"><button type="button" class="key3d" aria-label="Rewind"><svg><use href="#rewind"/></svg></button><button type="button" disabled aria-label="Play"><svg><use href="#play"/></svg></button><button type="button" disabled aria-label="Stop"><svg><use href="#stop"/></svg></button><button type="button" disabled aria-label="Step"><svg><use href="#step"/></svg></button><button type="button" disabled aria-label="Fast forward"><svg><use href="#ffwd"/></svg></button></div>
<div class="keys modes"><button type="button" aria-label="Turbo"><svg><use href="#eye"/></svg></button><button type="button" class="on" aria-label="Simulate tool"><svg><use href="#stock"/></svg></button><button type="button" aria-label="Simulate holder"><svg><use href="#funnel"/></svg></button></div>
<fieldset class="display"><legend>Display control</legend>
<div class="num"><label for="ms">Moves/step:</label><input id="ms" value="1"></div>
<div class="num"><label for="mr">Moves/refresh:</label><input id="mr" value="1"></div>
<div class="quality"><label for="sq">Speed</label><div class="ticks"><input id="sq" type="range" min="0" max="4" value="2" disabled></div><span>Quality</span></div>
<label class="check"><input type="checkbox" checked>Update after each toolpath</label>
</fieldset>
<fieldset class="stops"><legend>Stop options</legend>
<label class="check"><input type="checkbox">Stop on collision</label>
<label class="check"><input type="checkbox">Stop on tool change</label>
<label class="check"><input type="checkbox">Stop after each operation</label>
</fieldset>
<label class="check verbose"><input type="checkbox">Verbose</label>
<div class="keys"><button type="button" disabled aria-label="Configure"><svg><use href="#machine"/></svg></button><button type="button" class="key3d" aria-label="Section"><svg><use href="#section"/></svg></button><button type="button" class="key3d" aria-label="Chart"><svg><use href="#chart"/></svg></button><button type="button" disabled aria-label="Measure"><svg><use href="#measure"/></svg></button><button type="button" class="key3d" aria-label="Save STL"><svg><use href="#floppy"/></svg></button></div>
<div class="keys pace"><button type="button" class="key3d" aria-label="Slower"><svg><use href="#walk"/></svg></button><input type="range" aria-label="Verify speed" value="100"><button type="button" class="key3d faster" aria-label="Faster"><svg><use href="#run"/></svg></button></div>
<dl class="info"><dt>Operation #:</dt><dd>6</dd><dt>Toolpath:</dt><dd>Canned Cycle</dd><dt>Tool #:</dt><dd>40</dd><dt>Tool label:</dt><dd>&nbsp;3. DRILL</dd></dl>
<output class="percent">100%</output>
<div class="answers"><button type="button" aria-label="OK"><svg><use href="#ok"/></svg></button><button type="button" aria-label="Cancel"><svg><use href="#cancel"/></svg></button><button type="button" aria-label="Help"><svg><use href="#help"/></svg></button></div>
</form>
</div>
</body>
</html>
```
FILE: styles.css
```css
* { box-sizing: border-box; }
body {
  margin: 0;
  height: 100vh;
  display: flex;
  flex-direction: column;
  overflow: hidden;
  position: relative;
  background: #000;
  color: #111;
  font: 11px/14px "Open Sans", "Noto Sans", sans-serif;
}
button, input, select { font: inherit; color: inherit; margin: 0; padding: 0; }
button { border: 0; background: none; }
svg { display: block; flex: none; width: 16px; height: 16px; }
.defs { position: absolute; width: 0; height: 0; }
h1, h2, ul, dl, dd { margin: 0; padding: 0; font-size: inherit; font-weight: 400; }

/* title and menu */
.titlebar {
  flex: none;
  height: 20px;
  display: flex;
  align-items: center;
  gap: 3px;
  padding: 0 2px 0 3px;
  border-top: 1px solid #1d2b45;
  background: linear-gradient(#8facd2, #a9c3e2);
}
.titlebar h1 { flex: 1; margin-left: 2px; white-space: nowrap; }
.titlebar .logo { height: 15px; }
.winbtn {
  width: 28px;
  height: 16px;
  display: grid;
  place-items: center;
  border: 1px solid #4f6788;
  border-radius: 2px;
  background: linear-gradient(#c4d6ec 45%, #91afd2 50%, #b4cce8);
}
.winbtn svg { width: 12px; height: 10px; }
.winclose { border-color: #5c1c1c; background: linear-gradient(#e6a292 45%, #c63a20 50%, #dc6c50); }
.menubar {
  flex: none;
  height: 20px;
  display: flex;
  align-items: center;
  gap: 12px;
  padding-left: 7px;
  border-bottom: 1px solid #a8abb4;
  background: linear-gradient(#fff, #e0e3f4 40%, #d8dcf0);
}

/* toolbars */
.bars { flex: none; background: linear-gradient(#fff, #d2d9ed 10px); }
.bar { height: 29px; display: flex; align-items: flex-start; }
.bar + .bar { height: 28px; }
.group {
  height: 28px;
  display: flex;
  align-items: center;
  padding-right: 3px;
  border-right: 1px solid #a2a6b2;
  border-bottom: 1px solid #b9bdca;
  background: linear-gradient(#fafafa, #ececef 80%, #e0e3f2);
}
.group::before {
  content: "";
  width: 2px;
  height: 18px;
  margin: 0 5px 0 3px;
  background: repeating-linear-gradient(#b8bccb 0 2px, transparent 2px 4px);
}
.group.tight { padding-right: 0; }
.group.roomy { padding-right: 6px; }
.group button { width: 22px; height: 24px; display: grid; place-items: center; }
.group .arr { width: 13px; }
.arr svg { width: 8px; height: 8px; }
.arr:disabled { color: #999; }
.group i { width: 2px; height: 18px; margin: 0 2px; border-left: 1px solid #888; }
.sketcher { width: 264px; }
.sketcher button:first-child { margin-left: auto; }
.coords {
  width: 960px;
  height: 28px;
  display: flex;
  align-items: center;
  gap: 5px;
  padding-left: 7px;
  background: #fdf8c8;
  border-right: 1px solid #ccc;
  border-bottom: 1px solid #c6c5b8;
  font: 10px/14px "Liberation Sans", Arial, sans-serif;
}
.coords .key { flex: none; width: 20px; height: 20px; border: 1px solid #aaa; border-radius: 3px; background: #f8f8f3; }
.coords .zkey { margin-left: 180px; margin-right: 1px; }
.combo {
  appearance: none;
  flex: none;
  width: 67px;
  height: 20px;
  padding-left: 3px;
  border: 1px solid #aeb0ac;
  border-radius: 2px;
  background: #f5f5ef url("data:image/svg+xml,%3Csvg xmlns='http://www.w3.org/2000/svg' width='7' height='4'%3E%3Cpath d='M0 0h7L3.500 4z' fill='%23999'/%3E%3C/svg%3E") no-repeat right 4px center;
  opacity: 1;
  color: #111;
}
.tools { display: flex; align-items: center; gap: 3px; }
.tools button { width: 20px; height: 20px; display: grid; place-items: center; background: #f2f0dc; border-right: 1px solid #d4d2c4; border-bottom: 1px solid #d4d2c4; }
.tools svg { width: 18px; }
.tools .slim { width: 10px; color: #999; }
.slim svg { width: 7px; height: 7px; }
.tools b { width: 2px; }
.raised { flex: none; width: 20px; height: 20px; display: grid; place-items: center; border: 1px solid #777; border-radius: 3px; background: linear-gradient(#f5f5f5, #d0d0d4); }
.coords hr { flex: none; width: 6px; height: 28px; margin: 0 0 0 3px; border: 1px solid #bdbbae; border-width: 0 1px; }
.picks { display: flex; align-items: center; gap: 9px; margin: 0 6px 0 2px; }
.pill { width: 42px; height: 20px; border: 1px solid #999; border-radius: 3px; background: #f8f8f6; }
.pill:disabled { color: #999; border-color: #bbb; }
.ribbon {
  flex: none;
  height: 30px;
  display: flex;
  align-items: center;
  padding-left: 2px;
  background: #fdf8c8;
  border-top: 1px solid #c6c5b8;
  border-bottom: 2px solid #8e8c8c;
}
.ribbonhelp { margin-left: 865px; }

/* workspace */
.workspace { flex: 1; min-height: 0; display: flex; background: #fff; }
.strip { display: flex; flex-direction: column; align-items: center; gap: 5px; background: #f0f0f1; }
.strip i { height: 1px; width: 18px; margin: 1px 0; background: #999; flex: none; }
.leftbar { width: 25px; flex: none; background: #d2d9ed; }
.leftbar .strip { height: 367px; padding: 12px 0 0 4px; border-bottom: 1px solid #aaa; }
.leftbar .strip i { margin: 0; }
.manager { width: 297px; flex: none; display: flex; flex-direction: column; border-right: 2px solid #858585; background: #f0f0f0; }
.mhead { height: 17px; display: flex; justify-content: flex-end; gap: 6px; align-items: center; padding-right: 4px; background: #b0b0b0; }
.mhead button { width: 14px; height: 14px; display: grid; place-items: center; border: 1px solid #666; border-radius: 2px; background: #f3f3f3; }
.mhead svg { width: 10px; height: 10px; }
.mbody { flex: 1; min-height: 0; display: flex; flex-direction: column; margin: 18px 2px 5px 0; border: 1px solid #999; border-left: 0; }
.mtools { height: 30px; display: flex; align-items: center; justify-content: flex-end; gap: 5px; margin: 3px 12px 0 0; padding-right: 21px; border: 1px solid #999; border-width: 1px 0; }
.mtools i { width: 1px; height: 18px; background: #999; }
.mtools.second { border: 0; margin-top: 0; padding: 0 54px 4px 0; height: 32px; }
.tree { flex: 1; min-height: 0; display: grid; grid-template: minmax(0, 1fr) 16px / minmax(0, 1fr) 16px; margin-right: 2px; border: 1px solid #888; background: #f0f0f0; font-size: 10px; line-height: 15px; }
.tree ul { list-style: none; overflow: hidden; background: #fff; padding: 3px 0 0 192px; white-space: nowrap; }
.tree li { height: 15px; }
.tree li.sel { background: #3094f4; color: #fff; }
.vscroll { display: flex; flex-direction: column; align-items: center; gap: 4px; padding: 8px 0 5px; }
.vscroll svg, .hscroll svg { width: 7px; height: 7px; }
.vscroll .up { transform: rotate(180deg); }
.thumb { width: 13px; height: 250px; margin-top: auto; display: grid; place-items: center; border: 1px solid #999; border-radius: 2px; background: linear-gradient(90deg, #f4f4f4, #c9c9cb); }
.hscroll { display: flex; align-items: center; justify-content: flex-end; padding-right: 4px; }
.hscroll svg { transform: rotate(-90deg); }
.viewport { flex: 1; min-width: 0; background: #fff; }
.viewport svg { width: 100%; height: 100%; }
.rightbar { width: 29px; flex: none; overflow: hidden; background: #f0f0f1; border-left: 1px solid #ddd; }
.rightbar .strip { padding: 10px 0 0 4px; border-right: 4px solid #dfe3f3; }
.rightbar .top { height: 221px; padding-top: 13px; border-bottom: 1px solid #999; }

/* status bar */
.status {
  flex: none;
  height: 28px;
  display: flex;
  align-items: center;
  justify-content: flex-end;
  gap: 5px;
  overflow: hidden;
  border-top: 2px solid #aaa;
  border-bottom: 3px solid #9aa3b8;
  background: #f2eeee;
}
.status button { height: 18px; flex: none; padding: 0 3px; border: 1px solid #bbb; border-radius: 2px; background: #f4f4f4; }
.status button:nth-child(3) { padding: 0; }
.field { height: 20px; display: flex; align-items: center; padding-right: 4px; background: #fff; }
.field span { height: 18px; padding: 1px 2px; border: 1px solid #bbb; background: #f4f4f4; }
.field input { border: 0; height: 18px; outline: 0; }
.field svg, .status button svg { width: 8px; height: 8px; }
.depth { width: 58px; margin: 0 6px 0 3px; background: linear-gradient(90deg, #3094f4 16px, #fdf67c 16px); color: #fff; }
.level { width: 80px; padding-left: 6px; }
.status .swatch { padding: 0 2px 0 0; }
.swatch, .white { display: flex; align-items: center; gap: 4px; }
.swatch b { width: 30px; height: 17px; background: #000; }
.status .white { height: 20px; gap: 7px; background: #fff; border-color: #fff; }
.white b { width: 36px; height: 3px; background: #000; }
.white .thin { width: 42px; height: 1px; }
.status .pt { width: 10px; height: 10px; }
.status .tiny { width: 11px; padding: 0; }
.status .cut { width: 8px; border-right: 0; }
.blackout { flex: none; height: 35px; background: #000; }

/* floating Verify window */
.dialog {
  position: absolute;
  left: 15px;
  top: 53px;
  width: 206px;
  border: 1px solid #4f5a6a;
  border-radius: 5px 5px 0 0;
  background: #f0f0f0;
  font: 10px/14px "Liberation Sans", Arial, sans-serif;
}
.dtitle { height: 22px; display: flex; align-items: center; justify-content: space-between; padding: 0 3px 0 5px; border-radius: 4px 4px 0 0; background: linear-gradient(#bccde0, #dde7f2); font: 11px/14px "Open Sans", sans-serif; color: #444; }
.dclose { width: 29px; height: 15px; display: grid; place-items: center; border: 1px solid #8294ad; border-radius: 2px; background: #c6d6e8; }
.dclose svg { width: 11px; height: 9px; }
.dbody { display: flex; flex-direction: column; padding: 11px 12px 19px; }
.keys { display: grid; grid-template-columns: repeat(5, 35px); margin-left: 6px; width: 175px; align-items: center; }
.keys button { width: 27px; height: 26px; display: grid; place-items: center; border: 1px solid #c6c6c6; border-radius: 2px; background: #f1f1f1; }
.keys .key3d, .modes button, .answers button { border-color: #808080; border-radius: 3px; background: linear-gradient(#f4f4f4 48%, #dedede 52%, #d0d0d0); }
.modes { margin: 11px 0 7px 40px; grid-template-columns: repeat(3, 35px); width: 105px; }
.modes button { width: 29px; height: 28px; padding: 1px; border-color: #999; }
.modes svg { width: 25px; height: 24px; }
.modes .on { border-color: #2c6490; background: linear-gradient(#d8eefc 45%, #90cdf2 50%, #5cb0e4); }
fieldset { min-width: 0; margin: 0; border: 1px solid #dcdcdc; border-radius: 2px; padding: 5px 9px 7px 4px; width: 181px; }
legend { padding: 0 4px; margin-left: -1px; line-height: 12px; height: 12px; }
.num { display: flex; justify-content: space-between; align-items: center; margin: 0 0 4px 17px; }
.num input { width: 56px; height: 20px; padding: 0 4px 3px; border: 1px solid #d2d2d2; border-top-color: #999; background: #fff480; }
.quality { display: flex; align-items: center; height: 28px; margin: 13px 0 13px 8px; color: #9b9b9b; }
.ticks { width: 62px; height: 26px; margin: 0 10px 0 18px; background: repeating-linear-gradient(90deg, #aaa 0 1px, transparent 1px 13px) 4px 0 / 54px 3px no-repeat, repeating-linear-gradient(90deg, #aaa 0 1px, transparent 1px 13px) 4px 100% / 54px 3px no-repeat; }
input[type="range"] { appearance: none; display: block; width: 100%; height: 26px; background: linear-gradient(#b6b6b6, #b6b6b6) center / 100% 2px no-repeat; }
input[type="range"]::-webkit-slider-thumb { appearance: none; width: 10px; height: 20px; border: 1px solid #8c8c8c; border-radius: 2px; background: linear-gradient(90deg, #fafafa, #dedede); }
.check { display: flex; align-items: center; gap: 3px; height: 14px; }
.check input { appearance: none; width: 12px; height: 12px; border: 1px solid #858585; background: linear-gradient(135deg, #ccc, #fafafa); box-shadow: inset 0 0 0 1px #f4f4f4; }
.check input:checked { background: #f4f5fa url("data:image/svg+xml,%3Csvg xmlns='http://www.w3.org/2000/svg' viewBox='0 0 10 10'%3E%3Cpath d='M2 5l2 3 4-7' fill='none' stroke='%23424a94' stroke-width='1.600'/%3E%3C/svg%3E"); }
.stops { margin-top: 10px; padding: 9px 4px 12px; }
.stops .check + .check { margin-top: 7px; }
.verbose { margin: 8px 0 11px 5px; }
.pace { margin: 15px 0 11px 6px; grid-template-columns: 46px 73px 21px 35px; }
.pace .faster { grid-column: 4; }
.info { display: grid; grid-template-columns: 62px 1fr; width: 181px; padding: 3px 4px; border: 1px solid #dcdcdc; border-radius: 2px; line-height: 18px; }
.percent { align-self: center; width: 40px; height: 21px; margin: 9px 0; padding: 2px 3px; border: 1px solid #bbb; text-align: right; color: #858585; }
.answers { display: grid; grid-template-columns: repeat(3, 49px); gap: 8px; margin-left: 9px; }
.answers button { height: 25px; display: grid; place-items: center; border: 1px solid #808080; }
.answers svg { width: 18px; height: 18px; }
```
